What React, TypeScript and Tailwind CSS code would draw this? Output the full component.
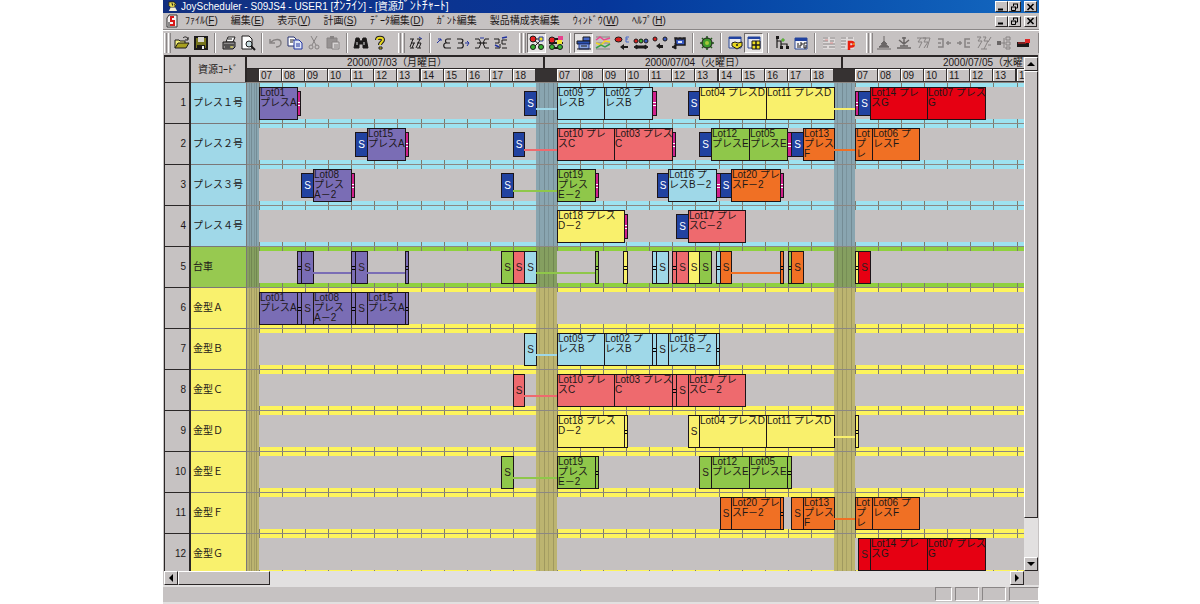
import type { ReactNode } from "react";

const DAY_WIDTH = 298;
const HOURS = ["07", "08", "09", "10", "11", "12", "13", "14", "15", "16", "17", "18"];
const HOUR_OFFSETS = [12, 35, 58, 81, 104, 127, 150, 174, 197, 220, 243, 266];
const DAYS = ["2000/07/03（月曜日）", "2000/07/04（火曜日）", "2000/07/05（水曜日）"];

const FILL = {
  purple: "bg-[#7a6db5]",
  blue: "bg-[#9fd8e8]",
  red: "bg-[#ee6a6e]",
  yellow: "bg-[#f9f06c]",
  green: "bg-[#8fc74a]",
  orange: "bg-[#f07024]",
  crimson: "bg-[#e60012]",
  navy: "bg-[#2142a0]",
  pink: "bg-[#d0218c]",
};

type Color = keyof typeof FILL;
// lot = work, set = setup, end = teardown, wait = connector line
type Bar = [kind: "lot" | "set" | "end" | "wait", from: number, to: number, color: Color, text?: string];
type Group = "press" | "cart" | "mold";

const LOT = {
  l01: ["lot", 12, 50, "purple", "Lot01\nプレスA"],
  l08: ["lot", 66, 104, "purple", "Lot08\nプレス\nA－2"],
  l15: ["lot", 120, 158, "purple", "Lot15\nプレスA"],
  l09: ["lot", 310, 357, "blue", "Lot09 プ\nレスB"],
  l02: ["lot", 357, 405, "blue", "Lot02 プ\nレスB"],
  l16: ["lot", 421, 469, "blue", "Lot16 プ\nレスB－2"],
  l10: ["lot", 310, 367, "red", "Lot10 プレ\nスC"],
  l03: ["lot", 367, 425, "red", "Lot03 プレス\nC"],
  l17: ["lot", 441, 498, "red", "Lot17 プレ\nスC－2"],
  l18: ["lot", 310, 377, "yellow", "Lot18 プレス\nD－2"],
  l04: ["lot", 452, 519, "yellow", "Lot04 プレスD"],
  l11: ["lot", 519, 587, "yellow", "Lot11 プレスD"],
  l19: ["lot", 310, 348, "green", "Lot19\nプレス\nE－2"],
  l12: ["lot", 464, 502, "green", "Lot12\nプレスE"],
  l05: ["lot", 502, 540, "green", "Lot05\nプレスE"],
  l20: ["lot", 484, 533, "orange", "Lot20 プレ\nスF－2"],
  l13: ["lot", 556, 587, "orange", "Lot13\nプレス\nF"],
  l13b: ["lot", 608, 625, "orange", "Lot\nプ\nレ"],
  l06: ["lot", 625, 672, "orange", "Lot06 プ\nレスF"],
  l14: ["lot", 623, 680, "crimson", "Lot14 プレ\nスG"],
  l07: ["lot", 680, 738, "crimson", "Lot07 プレス\nG"],
} satisfies Record<string, Bar>;

const ROWS: { name: string; group: Group; bars: Bar[] }[] = [
  {
    name: "プレス１号",
    group: "press",
    bars: [
      LOT.l01, ["end", 50, 53, "pink"], ["set", 277, 289, "navy"], ["wait", 289, 310, "blue"],
      LOT.l09, LOT.l02, ["end", 405, 409, "pink"], ["set", 441, 452, "navy"], LOT.l04, LOT.l11,
      ["wait", 587, 608, "yellow"], ["end", 608, 611, "pink"], ["set", 611, 623, "navy"], LOT.l14, LOT.l07,
    ],
  },
  {
    name: "プレス２号",
    group: "press",
    bars: [
      ["set", 108, 120, "navy"], LOT.l15, ["end", 158, 161, "pink"], ["set", 266, 277, "navy"],
      ["wait", 277, 310, "red"], LOT.l10, LOT.l03, ["end", 425, 428, "pink"], ["set", 452, 464, "navy"],
      LOT.l12, LOT.l05, ["end", 540, 544, "pink"], ["set", 544, 556, "navy"], LOT.l13,
      ["wait", 587, 608, "orange"], LOT.l13b, LOT.l06,
    ],
  },
  {
    name: "プレス３号",
    group: "press",
    bars: [
      ["set", 54, 66, "navy"], LOT.l08, ["end", 104, 107, "pink"], ["set", 254, 266, "navy"],
      ["wait", 266, 310, "green"], LOT.l19, ["end", 348, 351, "pink"], ["set", 410, 421, "navy"],
      LOT.l16, ["end", 469, 473, "pink"], ["set", 473, 484, "navy"], LOT.l20, ["end", 533, 536, "pink"],
    ],
  },
  {
    name: "プレス４号",
    group: "press",
    bars: [LOT.l18, ["end", 377, 380, "pink"], ["set", 429, 441, "navy"], LOT.l17],
  },
  {
    name: "台車",
    group: "cart",
    bars: [
      ["end", 50, 54, "purple"], ["set", 54, 66, "purple"], ["wait", 66, 104, "purple"],
      ["end", 104, 108, "purple"], ["set", 108, 120, "purple"], ["wait", 120, 158, "purple"],
      ["end", 158, 161, "purple"], ["set", 254, 266, "green"], ["set", 266, 277, "red"],
      ["set", 277, 289, "blue"], ["wait", 289, 348, "green"], ["end", 348, 351, "green"],
      ["end", 376, 380, "yellow"], ["end", 405, 409, "blue"], ["set", 409, 421, "blue"],
      ["end", 425, 429, "red"], ["set", 429, 441, "red"], ["set", 441, 452, "yellow"],
      ["set", 452, 464, "green"], ["end", 469, 473, "blue"], ["set", 473, 484, "orange"],
      ["wait", 484, 533, "orange"], ["end", 533, 536, "orange"], ["end", 541, 544, "green"],
      ["set", 544, 556, "orange"], ["end", 608, 611, "yellow"], ["set", 611, 623, "crimson"],
    ],
  },
  {
    name: "金型Ａ",
    group: "mold",
    bars: [
      LOT.l01, ["end", 50, 54, "purple"], ["set", 54, 66, "purple"], LOT.l08, ["end", 104, 108, "purple"],
      ["set", 108, 120, "purple"], LOT.l15, ["end", 158, 161, "purple"],
    ],
  },
  {
    name: "金型Ｂ",
    group: "mold",
    bars: [
      ["set", 277, 289, "blue"], ["wait", 289, 310, "blue"], LOT.l09, LOT.l02, ["end", 405, 409, "blue"],
      ["set", 409, 421, "blue"], LOT.l16, ["end", 469, 472, "blue"],
    ],
  },
  {
    name: "金型Ｃ",
    group: "mold",
    bars: [
      ["set", 266, 277, "red"], ["wait", 277, 310, "red"], LOT.l10, LOT.l03, ["end", 425, 429, "red"],
      ["set", 429, 441, "red"], LOT.l17,
    ],
  },
  {
    name: "金型Ｄ",
    group: "mold",
    bars: [
      LOT.l18, ["end", 377, 380, "yellow"], ["set", 441, 452, "yellow"], LOT.l04, LOT.l11,
      ["wait", 587, 608, "yellow"], ["end", 608, 611, "yellow"],
    ],
  },
  {
    name: "金型Ｅ",
    group: "mold",
    bars: [
      ["set", 254, 266, "green"], ["wait", 266, 310, "green"], LOT.l19, ["end", 348, 351, "green"],
      ["set", 452, 464, "green"], LOT.l12, LOT.l05, ["end", 540, 544, "green"],
    ],
  },
  {
    name: "金型Ｆ",
    group: "mold",
    bars: [
      ["set", 473, 484, "orange"], LOT.l20, ["end", 533, 536, "orange"], ["set", 544, 556, "orange"],
      LOT.l13, ["wait", 587, 608, "orange"], LOT.l13b, LOT.l06,
    ],
  },
  { name: "金型Ｇ", group: "mold", bars: [["set", 611, 623, "crimson"], LOT.l14, LOT.l07] },
];

const GROUP_LABEL = { press: "bg-[#a0d8e8]", cart: "bg-[#97c950]", mold: "bg-[#f9f16d]" };
const GROUP_STRIP = { press: "bg-[#9de2f0]", cart: "bg-[#8fd03e]", mold: "bg-[#fdf45c]" };
const GROUP_OFF = { press: "bg-[#89a5b0]", cart: "bg-[#859f60]", mold: "bg-[#bcb470]" };

const RAISED = "border border-t-white border-l-white border-r-[#2a2626] border-b-[#2a2626] bg-[#c6c2c2]";
const SUNKEN = "border border-b-white border-l-[#8a8686] border-r-white border-t-[#8a8686]";

/* ---------- timeline ---------- */

function BarView({ bar, small }: { bar: Bar; small: boolean }) {
  const [kind, from, to, color, text] = bar;
  const style = { left: from, width: to - from + 1 };
  if (kind === "wait") {
    return <div className={`absolute top-[25px] h-[2px] ${FILL[color]}`} style={style} />;
  }
  const box = small && kind !== "lot" ? "top-2 h-[25px]" : "top-1 h-[33px]";
  if (kind === "end") {
    return (
      <div className={`absolute flex flex-col justify-center border border-[#1c1418] ${box} ${FILL[color]}`} style={style}>
        <span className={`h-px ${small ? "bg-white" : "bg-black"}`} />
        <span className="h-[2px]" />
        <span className={`h-px ${small ? "bg-white" : "bg-black"}`} />
      </div>
    );
  }
  if (kind === "set") {
    return (
      <div
        className={`absolute flex items-center justify-center border border-[#1c1418] ${box} ${FILL[color]} ${color === "navy" ? "text-white" : "text-[#2a2020]"}`}
        style={style}
      >
        S
      </div>
    );
  }
  return (
    <div
      className={`absolute overflow-hidden whitespace-pre border border-[#1c1418] leading-[10px] ${box} ${FILL[color]}`}
      style={style}
    >
      {text}
    </div>
  );
}

function Timeline({ group, bars }: { group: Group; bars: Bar[] }) {
  return (
    <div className="relative h-10 overflow-hidden bg-[#c5c1c1]">
      <div className={`absolute inset-x-0 top-0 h-1 ${GROUP_STRIP[group]}`} />
      <div className={`absolute inset-x-0 bottom-0 h-1 ${GROUP_STRIP[group]}`} />
      {DAYS.map((day, d) => (
        <div key={day}>
          {HOUR_OFFSETS.map((x) => (
            <div
              key={x}
              className="absolute inset-y-0 w-px border-y-4 border-[#7d7a6c]"
              style={{ left: d * DAY_WIDTH + x }}
            />
          ))}
          <div
            className={`absolute inset-y-0 flex justify-evenly ${GROUP_OFF[group]}`}
            style={d === 0 ? { left: 0, width: 12 } : { left: d * DAY_WIDTH - 9, width: 21 }}
          >
            <span className="w-px bg-black/10" />
            <span className="w-px bg-black/15" />
            <span className="w-px bg-black/10" />
            <span className="w-px bg-black/15" />
          </div>
        </div>
      ))}
      {bars.map((bar, i) => (
        <BarView key={i} bar={bar} small={group === "press"} />
      ))}
    </div>
  );
}

function Schedule() {
  return (
    <table className="w-full table-fixed border-separate border-spacing-0 text-[10px] leading-[12px] text-[#1d1818]">
      <colgroup>
        <col className="w-[26px]" />
        <col className="w-14" />
        <col />
      </colgroup>
      <thead>
        <tr className="h-3">
          <th rowSpan={2} className="border-r-2 border-[#2a2626] bg-[#c6c2c2] p-0" />
          <th rowSpan={2} className="border-r-2 border-[#2a2626] bg-[#c6c2c2] p-0 font-normal">
            資源ｺｰﾄﾞ
          </th>
          <th className="p-0 font-normal">
            <div className="flex h-3 overflow-hidden">
              {DAYS.map((day) => (
                <div
                  key={day}
                  className="w-[298px] shrink-0 border-b border-r-2 border-[#2a2626] bg-[#c6c2c2] pl-1 text-center leading-[11px]"
                >
                  {day}
                </div>
              ))}
            </div>
          </th>
        </tr>
        <tr>
          <th className="p-0 font-normal">
            <div className="relative h-[13px] overflow-hidden bg-[#363232]">
              {DAYS.map((day, d) =>
                HOURS.map((hour, h) => (
                  <div
                    key={day + hour}
                    className="absolute top-0 h-3 w-[22px] border-l border-t border-white bg-[#c6c2c2] pl-px text-left leading-[12px]"
                    style={{ left: d * DAY_WIDTH + HOUR_OFFSETS[h] }}
                  >
                    {hour}
                  </div>
                )),
              )}
            </div>
          </th>
        </tr>
      </thead>
      <tbody>
        {ROWS.map((row, i) => (
          <tr key={row.name}>
            <td className="border-r-2 border-t border-[#2a2626] bg-[#c6c2c2] p-0 pr-[3px] text-right">{i + 1}</td>
            <td className={`whitespace-nowrap border-r border-t border-[#7b7778] p-0 pl-[2px] ${GROUP_LABEL[row.group]}`}>
              {row.name}
            </td>
            <td className="border-t border-[#8b8783] p-0">
              <Timeline group={row.group} bars={row.bars} />
            </td>
          </tr>
        ))}
      </tbody>
    </table>
  );
}

/* ---------- toolbar ---------- */

const K = "#1c1a1a";
const G = "#868282";

const ICONS: Record<string, ReactNode> = {
  open: (
    <>
      <path d="M1 13V5h4l1 1h5v3" fill="#f2ee7a" stroke={K} />
      <path d="M1 13l3-5h11l-3 5z" fill="#a8a020" stroke={K} />
      <path d="M9 3c2-2 4-1 5 1m0-2v3h-3" stroke={K} />
    </>
  ),
  save: (
    <>
      <path d="M2 2h12v12H2z" fill="#77751e" stroke={K} strokeWidth="2" />
      <path d="M5 2h6v5H5z" fill="#d8d6d0" />
      <path d="M4 10h8v4H4z" fill={K} />
      <path d="M9 11h2v3H9z" fill="#eee" />
    </>
  ),
  print: (
    <>
      <path d="M5 7l2-5h7l-2 5z" fill="#fff" stroke={K} />
      <path d="M2 7h12v5l-2 2H2z" fill="#8b8989" stroke={K} />
      <path d="M7 4h4M3 10h10M4 12h6" stroke={K} />
      <path d="M9 12h3" stroke="#e8e040" />
    </>
  ),
  preview: (
    <>
      <path d="M2 1h7l3 3v10H2z" fill="#fff" stroke={K} />
      <circle cx="9" cy="9" r="3" fill="#c6dce0" stroke={K} />
      <path d="M11 11l4 4" stroke={K} strokeWidth="2" />
    </>
  ),
  undo: <path d="M2 4v4h5M3 7c3-3 10-4 10 1 0 3-3 4-5 4" stroke={G} strokeWidth="1.5" />,
  copy: (
    <>
      <path d="M1 2h6l2 2v7H1z" fill="#fff" stroke="#25306e" />
      <path d="M3 5h4M3 7h3" stroke={K} />
      <path d="M7 5h5l3 3v6H7z" fill="#dfe6f7" stroke="#2334a0" />
      <path d="M9 9h4M9 11h4" stroke="#2334a0" />
    </>
  ),
  cut: (
    <>
      <path d="M5 1l5 9M11 1l-5 9" stroke={G} />
      <circle cx="5" cy="12" r="2" stroke={G} />
      <circle cx="11" cy="12" r="2" stroke={G} />
    </>
  ),
  paste: (
    <>
      <path d="M2 3h10v10H2z" fill="#969292" stroke={G} />
      <path d="M5 1h4v3H5z" fill={G} />
      <path d="M7 7h7v7H7z" fill="#d6d3d3" stroke={G} />
      <path d="M9 10h4M9 12h4" stroke={G} />
    </>
  ),
  find: (
    <>
      <path d="M3 3h3l1 3h2l1-3h3l2 10h-5V9H6v4H1z" fill={K} stroke={K} />
      <path d="M4 7v3M11 7v3" stroke="#ddd" />
    </>
  ),
  help: (
    <>
      <path d="M5 5c0-3 6-3 6 0 0 2-3 2-3 5" stroke={K} strokeWidth="4" />
      <path d="M5 5c0-3 6-3 6 0 0 2-3 2-3 5" stroke="#e8d820" strokeWidth="2" />
      <path d="M7 12h3v2H7z" fill="#e8d820" stroke={K} />
    </>
  ),
  network: (
    <>
      <path d="M2 4h4M9 4h4M3 8h4M9 8h4M2 13h4M9 13h4M5 4l-3 8M12 4l-4 9M6 8l-2 5M13 8l-2 5" stroke={K} />
      <path d="M11 2l3 2" stroke="#2334a0" />
    </>
  ),
  linkIn: (
    <>
      <path d="M15 4h-4c-2 0-2 4 0 4h3M10 8c-3 0-3 5 0 5h5" stroke={K} strokeWidth="1.2" />
      <path d="M1 8l4-4M2 4h3v2" stroke="#2334a0" />
    </>
  ),
  linkOut: (
    <>
      <path d="M2 4h4c3 0 2 4 0 4H3M6 8c3 0 3 5 0 5H2" stroke={K} strokeWidth="1.2" />
      <path d="M10 8h4M12 6l2 2-2 3" stroke="#2334a0" />
    </>
  ),
  linkBoth: (
    <>
      <path d="M1 4h4l2 4H3M15 4h-4L9 8h4M1 13h4l2-5M15 13h-4L9 8M5 8h6" stroke={K} />
      <path d="M6 3h4" stroke="#2334a0" />
    </>
  ),
  linkSwap: (
    <>
      <path d="M1 4h5v4H2M14 5H9v4h4M2 13h5V9M14 13H9" stroke={K} />
      <path d="M9 3l5-1M2 10l4 2" stroke="#2334a0" strokeWidth="1.5" />
    </>
  ),
  lots: (
    <>
      <path d="M5 5l8 7M5 12l8-8M6 4h6" stroke={K} />
      <circle cx="4" cy="4" r="3" fill="#e82020" stroke={K} />
      <path d="M10 2h4v4h-4z" fill="#f2e430" stroke="#2334a0" />
      <circle cx="4" cy="12" r="2.5" fill="#38b030" stroke={K} />
      <circle cx="12" cy="12" r="2.5" fill="#38b030" stroke={K} />
    </>
  ),
  lotsFlow: (
    <>
      <path d="M1 8h14M2 4h12M3 13h10" stroke={K} strokeWidth="2" />
      <circle cx="4" cy="5" r="3" fill="#e82020" stroke={K} />
      <path d="M10 1h5v4h-5z" fill="#e8408c" />
      <path d="M9 5h5v4H9z" fill="#f2e430" />
      <circle cx="4" cy="12" r="2.5" fill="#38b030" stroke={K} />
      <circle cx="12" cy="12" r="2.5" fill="#38b030" stroke={K} />
    </>
  ),
  machine: (
    <>
      <path d="M7 2h7v4H7z" fill="#4668c8" stroke={K} />
      <path d="M1 6h13v3H1z" fill="#2850b0" stroke={K} />
      <path d="M3 9h10v5H3z" fill="#8aa6e0" stroke="#203890" />
      <path d="M1 14h14M5 11h6" stroke={K} />
    </>
  ),
  chart: (
    <>
      <path d="M1 2h14M1 8h14M1 14h14" stroke={G} />
      <path d="M1 5l4-3 4 3 6-2" stroke="#e84a90" strokeWidth="1.5" />
      <path d="M1 8l5 2 4-4 5 1" stroke="#f0d820" strokeWidth="1.5" />
      <path d="M1 13l5-3 4 2 5-3" stroke="#38a050" strokeWidth="1.5" />
    </>
  ),
  moveLeft: (
    <>
      <ellipse cx="4.500" cy="4.500" rx="3.500" ry="2.500" fill="#d82020" stroke={K} />
      <path d="M12 2h3M12 4h2M12 7h3M12 2v5" stroke="#4668c8" />
      <path d="M6 12l4-3v2h4v2h-4v2z" fill={K} />
    </>
  ),
  moveBoth: (
    <>
      <circle cx="3" cy="6" r="2" fill="#d82020" stroke={K} />
      <circle cx="8" cy="6" r="2" fill="#38b030" stroke={K} />
      <circle cx="13" cy="6" r="2" fill="#3858c0" stroke={K} />
      <path d="M1 12l3-2v1h8v-1l3 2-3 2v-1H4v1z" fill={K} stroke={K} />
    </>
  ),
  moveGap: (
    <>
      <circle cx="3" cy="4" r="2" fill="#d82020" stroke={K} />
      <circle cx="13" cy="4" r="2" fill="#3858c0" stroke={K} />
      <path d="M4 11l4-3v2h3v3H8v1z" fill={K} />
    </>
  ),
  undoMove: (
    <>
      <path d="M4 3h2v1h2V3h2v1h2V3h2v7H5z" fill="#3858c0" stroke={K} strokeWidth="1.5" />
      <path d="M7 6h4v2H7z" fill="#dde4f6" />
      <path d="M1 12l4-2v4zM4 12V8" fill={K} stroke={K} />
    </>
  ),
  run: (
    <>
      <path d="M8 1v14M1 8h14M3 3l10 10M13 3L3 13" stroke="#23581c" strokeWidth="1.5" />
      <circle cx="8" cy="8" r="5" fill="#3f9a2c" stroke={K} />
      <circle cx="8" cy="8" r="2" fill="#a6c83a" />
    </>
  ),
  winGear: (
    <>
      <path d="M2 2h12v11H2z" fill="#e8e8ee" stroke="#2b4894" />
      <path d="M2 2h12v2H2z" fill="#2142a0" />
      <path d="M5 8l3-1 3 1 4-1v4l-5 3-5-3z" fill="#e8d820" stroke={K} />
      <circle cx="10" cy="10" r="1" fill={K} />
    </>
  ),
  winGrid: (
    <>
      <path d="M2 2h12v11H2z" fill="#e8e8ee" stroke="#2b4894" />
      <path d="M2 2h12v2H2z" fill="#2142a0" />
      <path d="M6 6h4v4H6zM10 6h4v4h-4zM6 10h4v4H6zM10 10h4v4h-4z" fill="#f0e020" stroke={K} />
    </>
  ),
  tree: (
    <>
      <path d="M3 1v12M3 6h4v7M7 9h6v4" stroke={K} strokeWidth="1.2" />
      <path d="M2 1h3v3H2z" fill={K} />
      <path d="M8 4h2v2H8z" fill="#e8d820" stroke="#38a030" />
      <path d="M12 11h3v3h-3zM6 11h3v3H6z" fill={K} />
    </>
  ),
  calendar: (
    <>
      <path d="M2 3h12v11H2z" fill="#f2f2f6" stroke="#2b4894" />
      <path d="M2 3h12v3H2z" fill="#2142a0" />
      <path d="M5 8v5M7 8h2v2H7v3M11 8h3M11 8v5h2v-3" stroke={K} />
    </>
  ),
  listOff: (
    <>
      <path d="M2 2h12v12H2z" fill="#dedada" />
      <path d="M2 3h5M9 3h5M2 6h5M9 6h4M2 9h12M2 12h4M8 12h6" stroke={G} />
      <path d="M4 5h3M9 8h3" stroke="#e09090" />
    </>
  ),
  listP: (
    <>
      <path d="M1 2h13v12H1z" fill="#dedada" />
      <path d="M1 3h5M8 3h5M1 6h5M1 9h5M1 12h4" stroke={G} />
      <path d="M9 15V7h2.500a2 2 0 0 1 0 4.500H9" stroke="#e82010" strokeWidth="2.500" />
      <path d="M14 8v2" stroke="#f0d820" />
    </>
  ),
  treeUp: <path d="M1 14h14M3 12h10M8 1v10M8 6L5 9h6zM8 8l-5 4h10z" fill="#6a6666" stroke="#6a6666" />,
  treeDown: <path d="M1 13h14M4 11h8M8 2v9M3 5l5 4 5-4M6 3h4" stroke="#6a6666" strokeWidth="1.5" />,
  netOff: <path d="M1 3h4l-3 4h4l-3 6M7 3h3L8 7h4l-4 6M14 3l-3 10M5 3h9" stroke={G} />,
  outOff: <path d="M2 4h5v8H2M2 8h3M10 8h5M12 6v4" stroke={G} strokeWidth="1.5" />,
  inOff: <path d="M1 8h5M4 6v4M14 4H9v8h5M11 8h3" stroke={G} strokeWidth="1.5" />,
  netOff2: <path d="M1 2h4l-3 4h4l-4 7M7 2h3L8 6h4l-4 8M15 2l-3 5M12 10h3M5 14h6" stroke={G} />,
  branchOff: (
    <>
      <path d="M1 6h4v4H1z" fill="#6a6666" />
      <path d="M5 8h4M10 2h4v3h-4zM10 7h4v3h-4zM10 12h4v2h-4zM8 3v10" stroke={G} />
    </>
  ),
  stop: (
    <>
      <path d="M1 7h12v5H1z" fill={K} />
      <path d="M9 4h5v4H9z" fill="#e02828" />
      <path d="M2 8h8" stroke="#e02828" />
    </>
  ),
};

// "|" is a thin separator, "*" marks a pressed button
const BARS = [
  ["open", "save", "|", "print", "preview", "|", "undo", "copy", "cut", "paste", "|", "find", "help"],
  ["network", "|", "linkIn", "linkOut", "linkBoth", "linkSwap"],
  ["lots*", "lotsFlow", "|", "machine*", "chart", "moveLeft", "moveBoth", "moveGap", "undoMove", "|", "run", "|", "winGear", "winGrid*", "|", "tree", "calendar", "|", "listOff", "listP"],
  ["treeUp", "treeDown", "netOff", "outOff", "inOff", "netOff2", "branchOff", "stop"],
];

function Grip() {
  return (
    <div className="flex h-5 gap-px">
      <span className="w-[3px] border-l border-r border-l-white border-r-[#8a8686]" />
      <span className="w-[3px] border-l border-r border-l-white border-r-[#8a8686]" />
    </div>
  );
}

function Toolbar() {
  return (
    <div className="flex h-[26px] items-center overflow-hidden border-t border-[#8a8686] bg-[#c6c2c2] pl-px shadow-[inset_0_1px_0_#fff]">
      {BARS.map((bar, b) => (
        <div key={b} className="flex items-center">
          {b > 0 && <div className="w-[9px]" />}
          <Grip />
          <div className="w-px" />
          {bar.map((item, i) => {
            if (item === "|") {
              return (
                <div key={i} className="flex h-5 w-[9px] justify-center">
                  <span className="w-[2px] border-l border-r border-l-[#8a8686] border-r-white" />
                </div>
              );
            }
            const pressed = item.endsWith("*");
            const name = item.replace("*", "");
            return (
              <button
                key={i}
                type="button"
                aria-label={name}
                aria-pressed={pressed}
                className={`flex h-5 items-center justify-center ${b === 3 ? "w-5" : "w-[19px]"} ${pressed ? "border border-b-white border-l-[#6e6a6a] border-r-white border-t-[#6e6a6a] bg-[#e4e2e2]" : ""}`}
              >
                <svg viewBox="0 0 16 16" fill="none" className="size-4 shrink-0">
                  {ICONS[name]}
                </svg>
              </button>
            );
          })}
        </div>
      ))}
      <span className="ml-1 h-5 w-[2px] border-l border-r border-l-[#8a8686] border-r-white" />
    </div>
  );
}

/* ---------- window chrome ---------- */

function WindowButtons() {
  const btn = `flex h-[11px] w-[13px] items-center justify-center ${RAISED}`;
  return (
    <div className="ml-auto flex pr-[2px]">
      <button type="button" aria-label="最小化" className={btn}>
        <svg viewBox="0 0 9 8" className="h-2 w-[9px]" stroke="#000" fill="none">
          <path d="M1 6.500h5" strokeWidth="2" />
        </svg>
      </button>
      <button type="button" aria-label="元に戻す" className={btn}>
        <svg viewBox="0 0 9 8" className="h-2 w-[9px]" stroke="#000" fill="none">
          <path d="M3 1h5M3.500 1v2M7.500 1v4H6M1 4h5M1.500 4v3.500h4V4" />
        </svg>
      </button>
      <button type="button" aria-label="閉じる" className={`ml-[3px] ${btn}`}>
        <svg viewBox="0 0 9 8" className="h-2 w-[9px]" stroke="#000" fill="none">
          <path d="M1.500 1l6 6M7.500 1l-6 6" strokeWidth="1.600" />
        </svg>
      </button>
    </div>
  );
}

const MENU = ["ﾌｧｲﾙ(F)", "編集(E)", "表示(V)", "計画(S)", "ﾃﾞｰﾀ編集(D)", "ｶﾞﾝﾄ編集", "製品構成表編集", "ｳｨﾝﾄﾞｳ(W)", "ﾍﾙﾌﾟ(H)"];

function MenuLabel({ text }: { text: string }) {
  const at = text.indexOf("(");
  if (at < 0) return <>{text}</>;
  return (
    <>
      {text.slice(0, at)}(<u>{text[at + 1]}</u>)
    </>
  );
}

function Arrow({ d, label }: { d: string; label: string }) {
  return (
    <button type="button" aria-label={label} className={`flex size-[14px] shrink-0 items-center justify-center ${RAISED}`}>
      <svg viewBox="0 0 8 8" className="size-2" fill="#000">
        <path d={d} />
      </svg>
    </button>
  );
}

export default function App() {
  return (
    <div className="h-screen bg-white pl-[163px] pr-[161px] font-['Liberation_Sans','Noto_Sans_CJK_JP',sans-serif]">
      <div className="flex h-full flex-col bg-[#c6c2c2] text-[10px] text-[#1d1818]">
        <header className="flex h-[13px] shrink-0 items-center bg-linear-to-r from-[#12307f] via-[#06369a] to-[#1468c0] pl-1 text-white">
          <svg viewBox="0 0 12 12" className="mr-[3px] size-[11px]">
            <path d="M2 1h6l2 3-2 3H4L2 5z" fill="#e8dc50" stroke="#222" />
            <path d="M4 7h5l2 4H2z" fill="#f4f0d8" />
            <path d="M5 3h1v2M8 3v2" stroke="#222" />
          </svg>
          <h1 className="whitespace-pre leading-[13px]">
            JoyScheduler - S09JS4 - USER1 [<span className="text-[12px]">ｵﾝﾗｲﾝ</span>] - [資源
            <span className="text-[12px]">ｶﾞﾝﾄﾁｬｰﾄ</span>]
          </h1>
          <WindowButtons />
        </header>

        <nav className="flex h-4 shrink-0 items-center pl-[3px]">
          <svg viewBox="0 0 12 14" className="mr-[7px] h-[14px] w-3" fill="none">
            <path d="M3 1h8v12H1V4z" fill="#f4f0f0" stroke="#333" />
            <path d="M8 3H5v4h3v4H4" stroke="#d81818" strokeWidth="2" />
            <path d="M3 8v4" stroke="#222" />
          </svg>
          <ul className="flex gap-[13px]">
            {MENU.map((item) => (
              <li key={item}>
                <button type="button" className="block whitespace-nowrap leading-[14px]">
                  <MenuLabel text={item} />
                </button>
              </li>
            ))}
          </ul>
          <WindowButtons />
        </nav>

        <Toolbar />

        <main className="mx-px flex min-h-0 flex-1 border-t-2 border-[#2a2626]">
          <div className="min-w-0 flex-1 overflow-hidden border-l border-[#2a2626]">
            <Schedule />
          </div>
          <div className="flex w-[14px] shrink-0 flex-col bg-[#e2e0e0]">
            <Arrow label="上へ" d="M0 6h8L4 2z" />
            <div className="min-h-0 flex-1">
              <div className={`h-[92%] ${RAISED}`} />
            </div>
            <Arrow label="下へ" d="M0 2h8L4 6z" />
          </div>
        </main>

        <div className="mx-px flex h-[14px] shrink-0">
          <div className="flex min-w-0 flex-1 bg-[#e2e0e0]">
            <Arrow label="左へ" d="M6 0v8L2 4z" />
            <div className="min-w-0 flex-1">
              <div className={`h-full w-[11%] ${RAISED}`} />
            </div>
            <Arrow label="右へ" d="M2 0v8l4-4z" />
          </div>
          <div className="w-[14px] shrink-0 bg-[#c6c2c2]" />
        </div>

        <footer className="flex h-[19px] shrink-0 justify-end gap-[3px] border-b-2 border-t-2 border-[#e2e0e0] pb-px">
          <span className={`w-[17px] ${SUNKEN}`} />
          <span className={`w-6 ${SUNKEN}`} />
          <span className={`w-6 ${SUNKEN}`} />
          <span className={`w-[30px] ${SUNKEN}`} />
        </footer>
      </div>
    </div>
  );
}
